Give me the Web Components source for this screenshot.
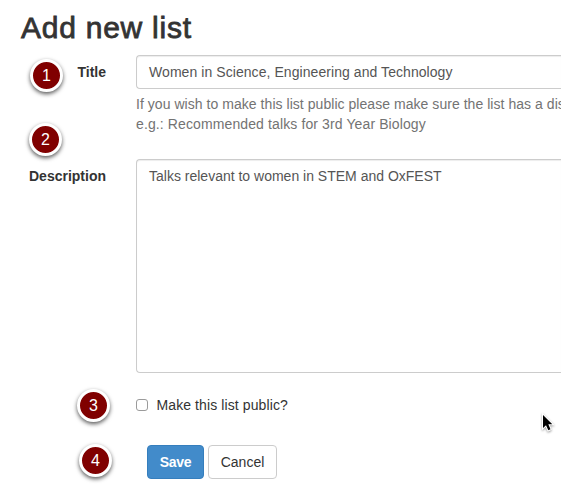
<!DOCTYPE html>
<html lang="en">
<head>
<meta charset="utf-8">
<title>Add new list</title>
<style>
  html, body { margin: 0; background: #fff; }
  body { font: 14px/20px "Liberation Sans", Arial, sans-serif; color: #333; overflow: hidden; }
</style>
</head>
<body>
<list-page></list-page>
<script>
const define = (name, html) => {
  const template = document.createElement('template');
  template.innerHTML = html;
  customElements.define(name, class extends HTMLElement {
    constructor() {
      super();
      this.attachShadow({ mode: 'open' }).append(template.content.cloneNode(true));
    }
  });
};

define('step-badge', `
<style>
  :host { position: absolute; box-sizing: border-box; width: 33px; height: 33px; border: 3px solid #fff; border-radius: 50%;
    background: #800000; color: #fff; font-size: 16px; line-height: 27px; text-align: center;
    box-shadow: 0 2px 4px rgba(0,0,0,.65); }
</style><slot></slot>`);

define('form-row', `
<style>
  :host { display: grid; grid-template-columns: 106px 1fr; column-gap: 30px; }
  .label { text-align: right; font-weight: bold; padding-top: 7px; }
  .field { min-width: 0; }
</style>
<div class="label"><slot name="label"></slot></div>
<div class="field"><slot></slot></div>`);

define('text-box', `
<style>
  :host { display: block; box-sizing: border-box; height: 34px; padding: 6px 12px; border: 1px solid #ccc; border-right: 0;
    border-radius: 4px 0 0 4px; color: #555; white-space: nowrap; box-shadow: inset 0 1px 1px rgba(0,0,0,.075); }
</style><slot></slot>`);

define('help-text', `
<style>
  :host { display: block; margin-top: 5px; color: #737373; white-space: nowrap; }
</style><slot></slot>`);

define('check-option', `
<style>
  :host { display: flex; align-items: center; gap: 8.5px; height: 20px; letter-spacing: .1px; }
  i { box-sizing: border-box; width: 12px; height: 12px; border: 1px solid #9b9b9b; border-radius: 3px; background: #fff; }
</style><i></i><span><slot></slot></span>`);

define('push-button', `
<style>
  :host { display: block; box-sizing: border-box; height: 34px; padding: 6px 0; border: 1px solid #ccc; border-radius: 4px;
    text-align: center; width: 69px; background: #fff; }
  :host([primary]) { width: 57px; background: #428bca; border-color: #357ebd; color: #fff; font-weight: bold; letter-spacing: -.25px; }
</style><slot></slot>`);

define('mouse-pointer', `
<style>
  :host { position: absolute; width: 16px; height: 22px; }
  svg { display: block; filter: drop-shadow(0 1px 1px rgba(0,0,0,.4)); overflow: visible; }
</style>
<svg width="16" height="22" viewBox="0 0 16 22"><path d="M2 2V15L5 12.2L7.3 17.3L9.5 16.3L7.3 11.3H11.3Z" fill="#000" stroke="#fff" stroke-width="2" paint-order="stroke"/></svg>`);

define('list-page', `
<style>
  :host { display: block; position: relative; box-sizing: border-box; width: 561px; height: 497px; overflow: hidden; }
  h1 { margin: 0; padding: 11px 0 0 21px; height: 44px; box-sizing: border-box; font-size: 30px; line-height: 34px; font-weight: 400;
    -webkit-text-stroke: .8px #333; letter-spacing: .75px; white-space: nowrap; }
  .title { height: 104px; margin-top: 11px; }
  .description { height: 236px; }
  .description text-box { height: 214px; }
  .t1 { letter-spacing: .065px; }
  .t2 { letter-spacing: .045px; }
  .t3 { letter-spacing: .115px; }
  .actions { display: flex; gap: 4px; padding: 30px 0 0 147px; }
  .public { padding-left: 136px; }
</style>
<h1>Add new list</h1>
<form-row class="title"><span slot="label">Title</span>
  <text-box><span class="t1">Women in Science, Engineering and Technology</span></text-box>
  <help-text><span class="t2">If you wish to make this list public please make sure the list has a dis</span><br><span class="t3">e.g.: Recommended talks for 3rd Year Biology</span></help-text>
</form-row>
<form-row class="description"><span slot="label">Description</span>
  <text-box>Talks relevant to women in STEM and OxFEST</text-box>
</form-row>
<check-option class="public">Make this list public?</check-option>
<div class="actions"><push-button primary>Save</push-button><push-button>Cancel</push-button></div>
<step-badge style="left:30px;top:59px">1</step-badge>
<step-badge style="left:29px;top:123px">2</step-badge>
<step-badge style="left:77px;top:389px">3</step-badge>
<step-badge style="left:79px;top:444px">4</step-badge>
<mouse-pointer style="left:541px;top:413px"></mouse-pointer>`);
</script>
</body>
</html>
